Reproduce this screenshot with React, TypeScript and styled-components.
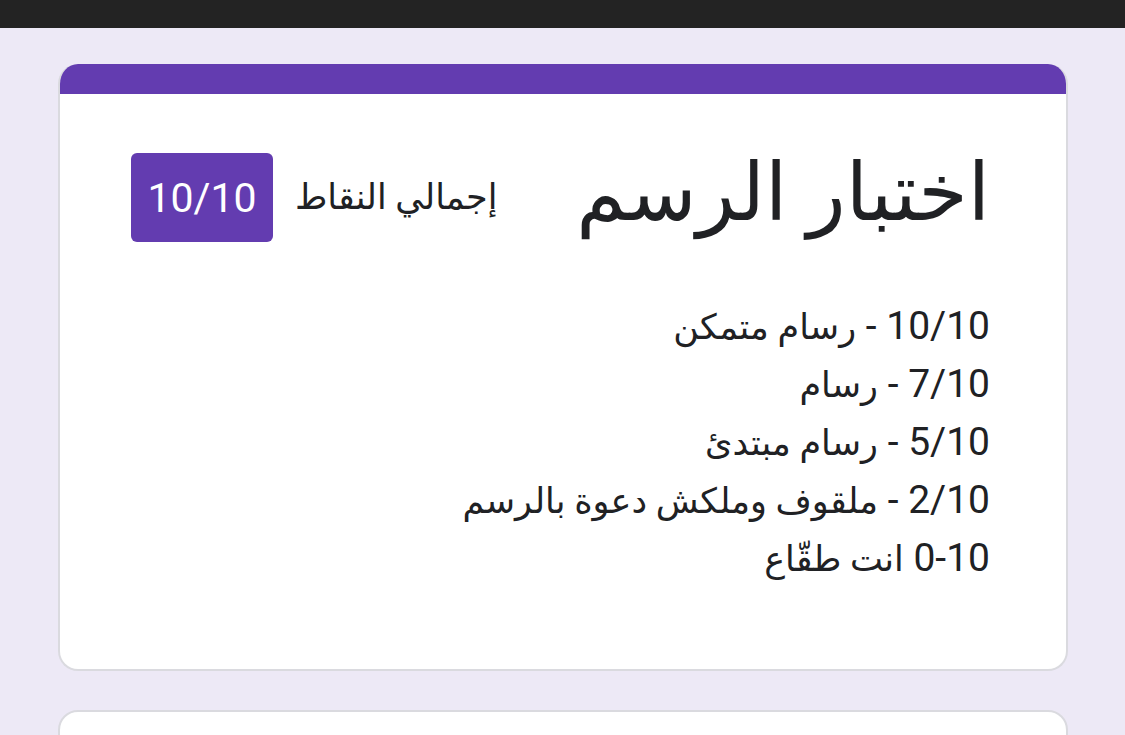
import React from 'react';
import styled, { createGlobalStyle } from 'styled-components';

// Globale Styles
const GlobalStyle = createGlobalStyle`
  html, body {
    margin: 0;
    padding: 0;
    background: #ede9f6;
    font-family: Roboto, "DejaVu Sans", sans-serif;
    color: #202124;
  }
`;

const Screen = styled.div`
  height: 735px;
  overflow: hidden;
`;

const StatusBar = styled.div`
  height: 28px;
  background: #232323;
`;

const Page = styled.main`
  padding: 36px 57px 0 58px;
  display: flex;
  flex-direction: column;
  gap: 39px;
`;

const Card = styled.section<{ $accent?: boolean }>`
  background: #fff;
  border: 2px solid #dadadf;
  border-radius: 20px;
  overflow: hidden;
  ${p => p.$accent && 'border-top: none;'}
`;

const AccentBar = styled.div`
  height: 30px;
  background: #633cb0;
`;

const CardBody = styled.div`
  direction: rtl;
  padding: 59px 76px 82px 71px;
`;

const HeaderRow = styled.div`
  display: flex;
  align-items: flex-start;
  justify-content: space-between;
`;

const Title = styled.h1`
  margin: 0;
  font-size: 80px;
  font-weight: 400;
  line-height: 80px;
  color: #202124;
`;

const ScoreGroup = styled.div`
  display: flex;
  align-items: center;
  gap: 22px;
`;

const ScoreLabel = styled.span`
  font-size: 35px;
  color: #202124;
`;

const ScoreBadge = styled.span`
  direction: ltr;
  display: inline-flex;
  align-items: center;
  justify-content: center;
  width: 142px;
  height: 89px;
  border-radius: 6px;
  background: #633cb0;
  color: #fff;
  font-size: 41px;
`;

const Ranks = styled.div`
  margin-top: 55px;
  font-size: 39px;
  line-height: 58px;
  color: #202124;
`;

const RankLine = styled.div`
  white-space: nowrap;
  height: 58px;
`;

const RankScore = styled.span`
  font-size: 39px;
`;

const RankName = styled.span`
  font-size: 35px;
`;

const EmptyCard = styled(Card)`
  height: 80px;
`;

const ranks = [
  { score: '10/10 -', name: 'رسام متمكن' },
  { score: '7/10 -', name: 'رسام' },
  { score: '5/10 -', name: 'رسام مبتدئ' },
  { score: '2/10 -', name: 'ملقوف وملكش دعوة بالرسم' },
  { score: '0-10', name: 'انت طقّاع' },
];

export default function App() {
  return (
    <Screen>
      <GlobalStyle />
      <StatusBar />
      <Page>
        <Card $accent>
          <AccentBar />
          <CardBody>
            <HeaderRow>
              <Title>اختبار الرسم</Title>
              <ScoreGroup>
                <ScoreLabel>إجمالي النقاط</ScoreLabel>
                <ScoreBadge>10/10</ScoreBadge>
              </ScoreGroup>
            </HeaderRow>
            <Ranks>
              {ranks.map(r => (
                <RankLine key={r.score}>
                  <RankScore>{r.score}</RankScore> <RankName>{r.name}</RankName>
                </RankLine>
              ))}
            </Ranks>
          </CardBody>
        </Card>
        <EmptyCard />
      </Page>
    </Screen>
  );
}
